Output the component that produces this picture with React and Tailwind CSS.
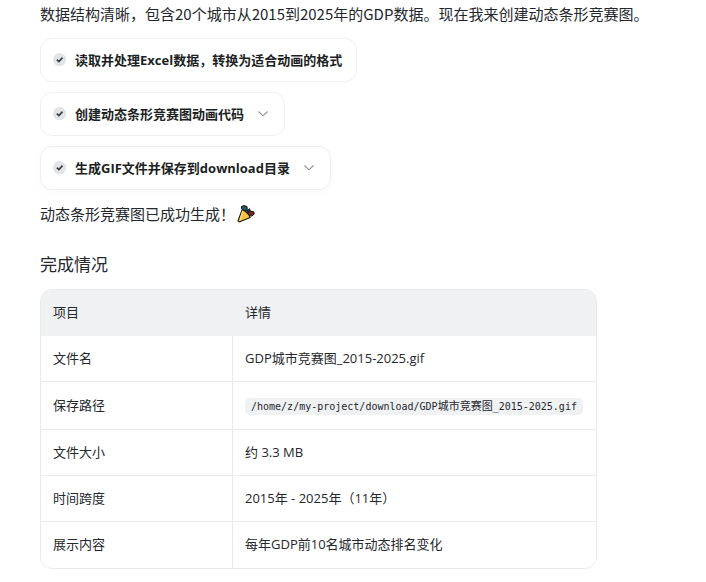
import React from "react";

function CheckBadge() {
  return (
    <svg className="size-[14px] shrink-0" viewBox="0 0 14 14" aria-hidden="true">
      <circle cx="6.6" cy="6.6" r="6.6" fill="#e2e4e6" />
      <path d="M3.8 6.6 L5.9 8.6 L9.5 4.7" fill="none" stroke="#3a3f45" strokeWidth="1.7" />
    </svg>
  );
}

function Chevron() {
  return (
    <svg className="size-[14px] shrink-0" viewBox="0 0 14 14" aria-hidden="true">
      <path d="M2.5 4.5 L7 8.8 L11.5 4.5" fill="none" stroke="#8b9096" strokeWidth="1.1" />
    </svg>
  );
}

function PartyPopper() {
  return (
    <svg className="size-[18px] shrink-0" viewBox="0 0 18 18" role="img" aria-label="🎉">
      <path d="M4.5 1.5 L7 .6 L10 1.6 L10.4 6.4 L7.2 5.8 L4.5 3.6Z" fill="#1d5b73" stroke="#111" strokeWidth="1" />
      <path d="M10.6 7.4 L12.8 5.8 L16.8 6.8 L17.2 9.2 L14.6 11 L11.6 10.6Z" fill="#7d2320" stroke="#111" strokeWidth="1" />
      <path d="M10.4 5.4 L12.6 3.6 L13 5.6 L11 7.6Z" fill="#2a2f3d" stroke="#111" strokeWidth=".8" />
      <path d="M5.2 4.6 L8.4 6.4 L11.6 9.6 L13.2 12.6 L2.2 16.9 L1 15.8Z" fill="#f6c342" stroke="#1a1407" strokeWidth="1.1" strokeLinejoin="round" />
      <path d="M5.8 5.8 L3.2 14.6" stroke="#ffe08a" strokeWidth="1.1" />
    </svg>
  );
}

const chipBase =
  "flex h-11 items-center rounded-xl border border-[#eeeff0] bg-white pr-[14px] pl-3 text-[13px] leading-5 font-bold text-[#1c1f23]";

function Step({ label, expandable, raised }) {
  const content = (
    <>
      <CheckBadge />
      <span className="ml-2">{label}</span>
    </>
  );
  if (!expandable) {
    return <div className={chipBase}>{content}</div>;
  }
  return (
    <button type="button" className={raised ? `${chipBase} shadow-[0_2px_10px_rgba(0,0,0,0.03)]` : chipBase}>
      {content}
      <span className="ml-3">
        <Chevron />
      </span>
    </button>
  );
}

const rows = [
  ["文件名", "GDP城市竞赛图_2015-2025.gif"],
  [
    "保存路径",
    <code className="inline-block rounded-[5px] bg-[#f0f1f3] px-1.5 align-middle font-['DejaVu_Sans_Mono','Noto_Sans_CJK_SC',monospace] text-[10px] leading-[17px] whitespace-nowrap">
      /home/z/my-project/download/GDP<span className="text-[11px]">城市竞赛图</span>_2015-2025.gif
    </code>,
  ],
  ["文件大小", "约 3.3 MB"],
  ["时间跨度", "2015年 - 2025年（11年）"],
  ["展示内容", "每年GDP前10名城市动态排名变化"],
];

export default function App() {
  return (
    <main
      lang="zh-CN"
      className="min-h-screen bg-white px-10 pt-0.5 pb-3 font-['Open_Sans','Noto_Sans_CJK_SC',sans-serif] text-[15px] leading-6 text-[#24272c]"
    >
      <p className="font-['Noto_Sans_CJK_SC',sans-serif]">
        数据结构清晰，包含20个城市从2015到2025年的GDP数据。现在我来创建动态条形竞赛图。
      </p>
      <div className="mt-3 flex flex-col items-start gap-2.5">
        <Step label="读取并处理Excel数据，转换为适合动画的格式" />
        <Step label="创建动态条形竞赛图动画代码" expandable />
        <Step label="生成GIF文件并保存到download目录" expandable raised />
      </div>
      <p className="mt-3 flex items-center gap-0.5">
        <span>动态条形竞赛图已成功生成！</span>
        <PartyPopper />
      </p>
      <h3 className="mt-[27px] text-[17px] leading-6">完成情况</h3>
      <div className="mt-3 w-[557px] max-w-full overflow-hidden rounded-xl border border-[#e9eaec]">
        <table className="w-full border-separate border-spacing-0 text-left text-[13px] leading-5">
          <thead>
            <tr className="h-[46px] bg-[#f0f1f3]">
              <th scope="col" className="w-[192px] px-3 pb-0.5 font-normal">项目</th>
              <th scope="col" className="px-3 pb-0.5 font-normal">详情</th>
            </tr>
          </thead>
          <tbody className="[&>tr:last-child>td]:border-b-0">
            {rows.map(([name, detail], i) => (
              <tr key={name} className={i === 1 ? "h-12" : "h-[46px]"}>
                <td className="border-r border-b border-[#e9eaec] px-3 pb-0.5">{name}</td>
                <td className="border-b border-[#e9eaec] px-3 pb-0.5">{detail}</td>
              </tr>
            ))}
          </tbody>
        </table>
      </div>
    </main>
  );
}
